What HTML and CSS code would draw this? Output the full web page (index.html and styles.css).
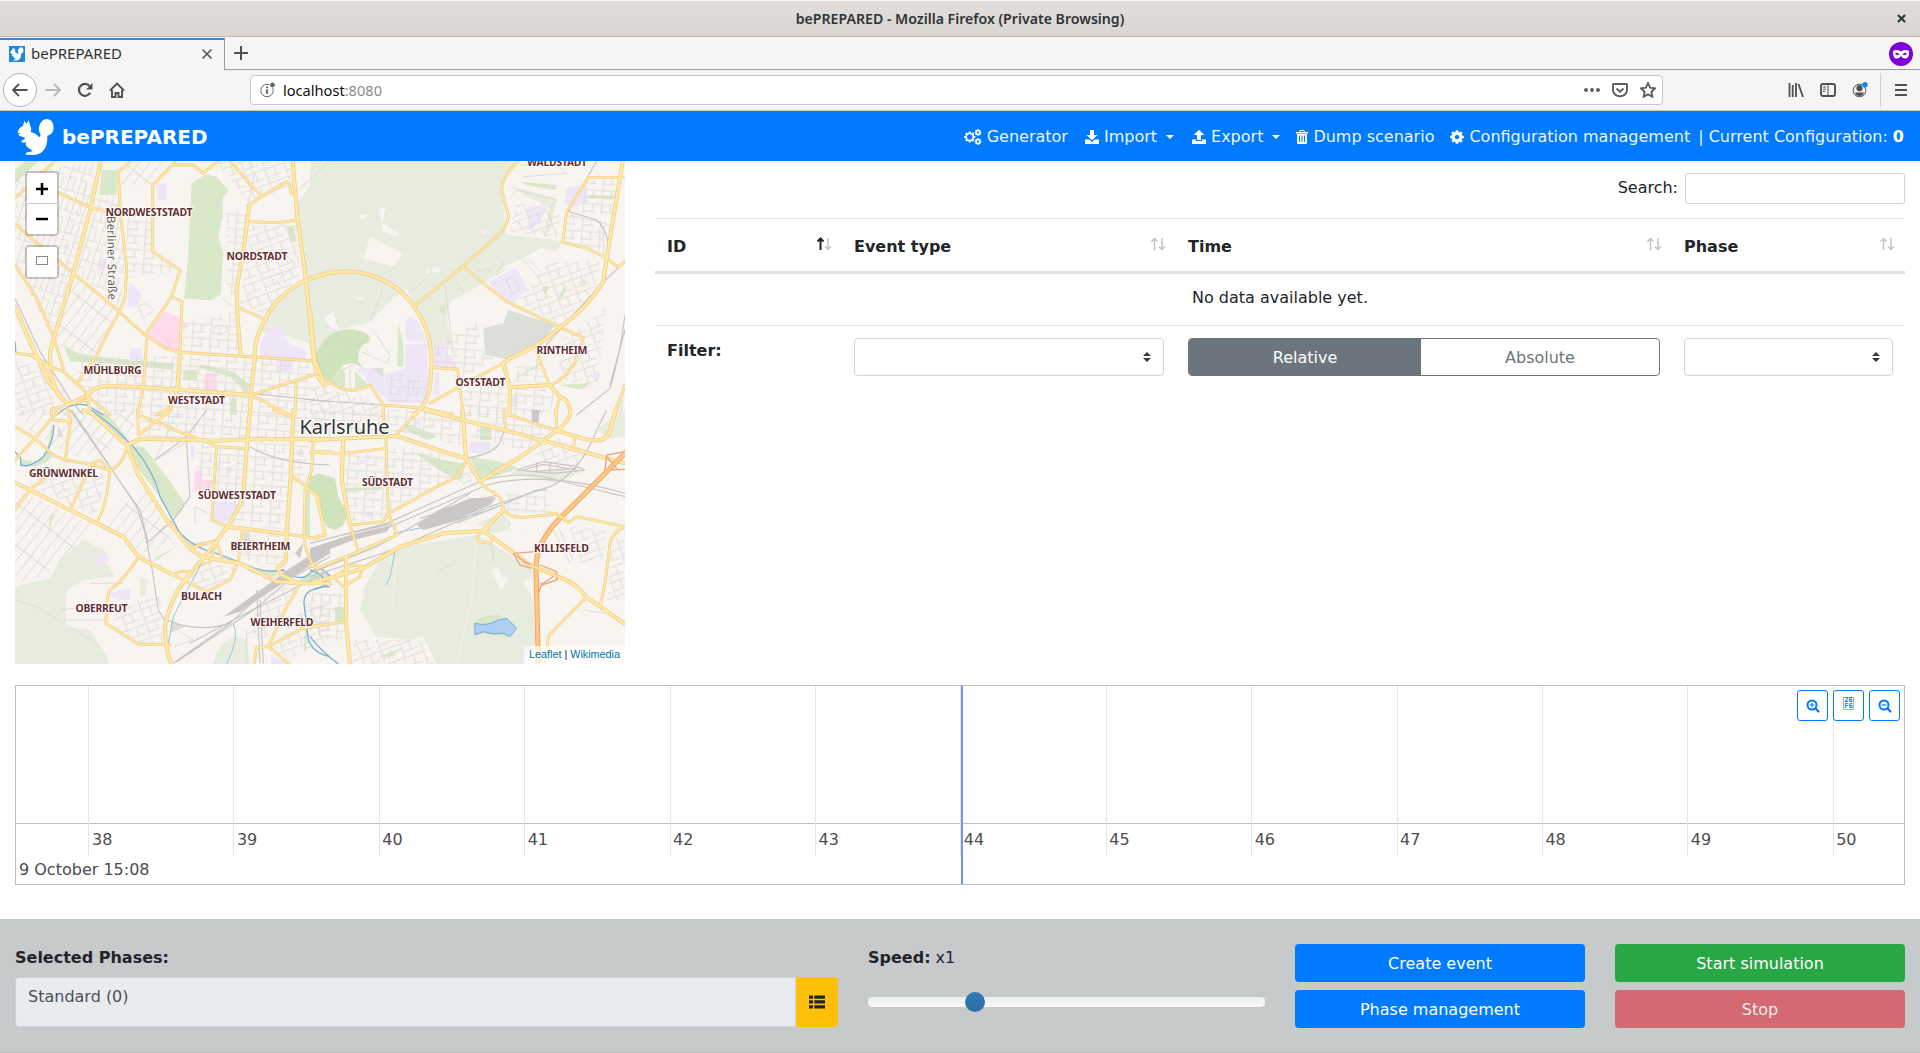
FILE: index.html
```html
<!DOCTYPE html>
<html lang="en">
<head>
<meta charset="utf-8">
<title>bePREPARED</title>
<link rel="stylesheet" href="styles.css">
</head>
<body>
<svg class="defs" width="0" height="0" aria-hidden="true">
  <symbol id="squirrel" viewBox="52 355 114 114"><path d="M71 374L74 364 80 372 87 362 91 375Q97 387 93 397Q108 400 119 413Q126 408 119 398Q115 384 122 371Q130 358 142 358Q161 360 162 384Q161 403 143 408Q144 440 130 454Q119 466 99 466L79 465Q76 459 85 458L99 455Q94 449 86 445Q75 437 79 428Q70 431 65 427Q64 423 74 419L76 414Q61 412 54 404L64 402 54 399Q57 383 71 378Z"/></symbol>
  <symbol id="cog" viewBox="0 0 1792 1792"><path d="M1152 896q0-106-75-181t-181-75-181 75-75 181 75 181 181 75 181-75 75-181zm512-109v222q0 12-8 23t-20 13l-185 28q-19 54-39 91 35 50 107 138 10 12 10 25t-9 23q-27 37-99 108t-94 71q-12 0-26-9l-138-108q-44 23-91 38-16 136-29 186-7 28-36 28h-222q-14 0-24.500-8.500t-11.500-21.500l-28-184q-49-16-90-37l-141 107q-10 9-25 9-14 0-25-11-126-114-165-168-7-10-7-23 0-12 8-23 15-21 51-66.500t54-70.500q-27-50-41-99l-183-27q-13-2-21-12.500t-8-23.500v-222q0-12 8-23t19-13l186-28q14-46 39-92-40-57-107-138-10-12-10-24 0-10 9-23 26-36 98.500-107.500t94.500-71.500q13 0 26 10l138 107q44-23 91-38 16-136 29-186 7-28 36-28h222q14 0 24.500 8.500t11.500 21.500l28 184q49 16 90 37l142-107q9-9 24-9 13 0 25 10 129 119 165 170 7 8 7 22 0 12-8 23-15 21-51 66.500t-54 70.500q26 50 41 98l183 28q13 2 21 12.500t8 23.500z"/></symbol>
  <symbol id="cogs" viewBox="0 0 18 16"><use href="#cog" x="-.8" y="1.500" width="13" height="13"/><circle cx="5.700" cy="8" r="2.700" class="hole"/><use href="#cog" x="10" y="-.5" width="8" height="8"/><use href="#cog" x="10" y="8.500" width="8" height="8"/></symbol>
  <symbol id="download" viewBox="0 0 16 16"><path d="M6 1h4v5h3.500L8 11.200 2.500 6H6zM1 10.500h4.200L8 13l2.800-2.500H15V15H1z"/></symbol>
  <symbol id="upload" viewBox="0 0 16 16"><path d="M6 11V6H2.500L8 .8 13.500 6H10v5zM1 10.500h4V12h6v-1.500h4V15H1z"/></symbol>
  <symbol id="trash" viewBox="0 0 14 16"><path fill-rule="evenodd" d="M5 1h4l1 2h3v1.500H1V3h3zm.5 1L5 3h4l-.5-1zM2 5h10v9q0 1-1 1H3q-1 0-1-1zm2 1.500V13h1V6.500zm2.500 0V13h1V6.500zm2.500 0V13h1V6.500z"/></symbol>
  <symbol id="zoom-in" viewBox="0 0 14 14"><circle cx="6" cy="6" r="4.500" fill="none" stroke="currentColor" stroke-width="2"/><path d="M6 3.700v4.600M3.700 6h4.600" fill="none" stroke="currentColor" stroke-width="1.200"/><path d="M9.500 9.500l3 3" stroke="currentColor" stroke-width="2.200" stroke-linecap="round"/></symbol>
  <symbol id="zoom-out" viewBox="0 0 14 14"><circle cx="6" cy="6" r="4.500" fill="none" stroke="currentColor" stroke-width="2"/><path d="M3.700 6h4.600" stroke="currentColor" stroke-width="1.200"/><path d="M9.500 9.500l3 3" stroke="currentColor" stroke-width="2.200" stroke-linecap="round"/></symbol>
  <symbol id="sort" viewBox="0 0 16 14"><path class="up" d="M4.500 13V1.500M1.500 4.500l3-3 3 3"/><path class="down" d="M12 1v11.500M9 9.500l3 3 3-3"/></symbol>
</svg>

<header class="browser">
  <div class="titlebar"><span class="window-title">bePREPARED - Mozilla Firefox (Private Browsing)</span>
    <svg class="window-close" viewBox="0 0 10 10"><path d="M1 1l8 8M9 1L1 9"/></svg></div>
  <div class="tabs">
    <div class="tab"><span class="favicon"><svg><use href="#squirrel"/></svg></span><span class="tab-title">bePREPARED</span><svg class="tab-close" viewBox="0 0 10 10"><path d="M.5.5l9 9M9.500.5l-9 9"/></svg></div>
    <div class="tab-strip"><svg class="new-tab" viewBox="0 0 14 14"><path d="M7 0v14M0 7h14"/></svg>
      <svg class="private" viewBox="0 0 24 24"><circle cx="12" cy="12" r="12" fill="#8000d7"/><path fill="#fff" fill-rule="evenodd" d="M4 9Q8 7 12 9.500Q16 7 20 9Q20.500 16 17 16.500Q14 17 12 14Q10 17 7 16.500Q3.500 16 4 9zM6 12Q8 14 10.500 12.500Q8 9.500 6 12zM18 12Q16 14 13.500 12.500Q16 9.500 18 12z"/></svg></div>
  </div>
  <div class="toolbar">
    <span class="back"><svg viewBox="0 0 16 16"><path d="M15.500 8H1M7 1.800L1 8l6 6.200"/></svg></span>
    <svg class="tool forward" viewBox="0 0 16 16"><path d="M.5 8H15M9 1.800L15 8l-6 6.200"/></svg>
    <svg class="tool reload" viewBox="0 0 16 16"><path d="M13.200 10.800A6 6 0 1 1 12.600 4"/><path d="M15.500 1v6.500H9z" fill="#4c5254" stroke="none"/></svg>
    <svg class="tool home" viewBox="0 0 16 16"><path d="M1 8.500L8 1.500l7 7M3 8v7h3.500v-4h3v4H13V8"/></svg>
    <div class="address">
      <svg class="info" viewBox="0 0 16 16"><circle cx="7" cy="8.500" r="6.200"/><path d="M7 7.500v4.200M7 4.500v1.800" stroke-width="2"/><circle cx="12.500" cy="3" r="2.800" fill="#666" stroke="#fff" stroke-width=".8"/></svg>
      <span class="url">localhost<span class="port">:8080</span></span>
      <span class="address-actions">
        <svg viewBox="0 0 16 16"><g fill="#5c6062" stroke="none"><circle cx="2" cy="8" r="2"/><circle cx="8" cy="8" r="2"/><circle cx="14" cy="8" r="2"/></g></svg>
        <svg viewBox="0 0 16 16"><path d="M1.500 2h13q.5 0 .5.500V8A7 6.300 0 0 1 1 8V2.500Q1 2 1.500 2zM4.500 6.500L8 9.800l3.500-3.300"/></svg>
        <svg viewBox="0 0 16 16"><path d="M8 1.200l2.100 4.500 4.900.6-3.600 3.400.9 5L8 12.300l-4.300 2.400.9-5L1 6.300l4.900-.6z"/></svg>
      </span>
    </div>
    <div class="toolbar-end">
      <svg viewBox="0 0 16 16"><path d="M1.500 1v14M4.700 3v12M8 1v14M10.500 2l4.500 13" stroke-width="1.800"/></svg>
      <svg viewBox="0 0 16 16"><rect x="1" y="2" width="14" height="12" rx="2"/><path d="M8 2v12M3 5h3M3 7.300h3M3 9.500h2" stroke-width="1"/></svg>
      <svg viewBox="0 0 16 16"><circle cx="7.500" cy="8.500" r="6.300" stroke-width="1"/><circle cx="7.500" cy="6.200" r="3.100" fill="#4c5254" stroke="none"/><path d="M3 10.500h9q-1 3.500-4.500 3.500T3 10.500z" fill="#4c5254" stroke="none"/><circle cx="13" cy="2.800" r="2.700" fill="#0a84ff" stroke="none"/></svg>
      <span class="toolbar-rule"></span>
      <svg class="burger" viewBox="0 0 12 14"><path d="M0 2h12M0 7h12M0 12h12"/></svg>
    </div>
  </div>
</header>

<nav class="navbar">
  <div class="brand"><svg><use href="#squirrel"/></svg><span>bePREPARED</span></div>
  <div class="menu">
    <a class="item generator"><svg><use href="#cogs"/></svg>Generator</a>
    <a class="item dropdown import"><svg><use href="#download"/></svg>Import<i class="caret"></i></a>
    <a class="item dropdown"><svg><use href="#upload"/></svg>Export<i class="caret"></i></a>
    <a class="item dump"><svg><use href="#trash"/></svg>Dump scenario</a>
    <a class="item config"><svg><use href="#cog"/></svg>Configuration management</a>
    <span class="current">| Current Configuration: <b>0</b></span>
  </div>
</nav>

<main class="workspace">
  <section class="map">
    <svg class="map-canvas" viewBox="15 161 610 503" width="610" height="503">
      <defs>
        <pattern id="grid-a" width="54" height="42" patternUnits="userSpaceOnUse" patternTransform="rotate(4)"><path class="street" d="M0 3H54M20 3V42M46 3V25M20 26H54"/></pattern>
        <pattern id="grid-b" width="36" height="62" patternUnits="userSpaceOnUse" patternTransform="rotate(18)"><path class="street" d="M4 0V62M22 0V36M4 36H36M0 58H22"/></pattern>
        <pattern id="grid-c" width="26" height="100" patternUnits="userSpaceOnUse" patternTransform="rotate(38)"><path class="street" d="M5 0V100M0 90H26"/></pattern>
        <pattern id="grid-d" width="60" height="44" patternUnits="userSpaceOnUse" patternTransform="rotate(-20)"><path class="street" d="M0 4H60M12 4V44M40 4V30M12 30H60"/></pattern>
        <g id="roads">
          <g transform="translate(0 155) scale(.33333)">
            <path d="M45 208L120 272 220 355 358 470 435 540 500 582 540 592 765 606 942 618M170 110L272 158 318 170M318 172L458 183M395 18L355 50 362 180 380 340 375 430 358 470 325 530 290 600 230 685M525 22L458 90 458 290 540 345 515 425 435 540M515 425L546 440 540 592M532 700L515 755 470 780M525 30L580 30 608 55 655 18M690 18L785 125M748 150L785 125 860 80Q872 95 872 115L885 115M750 200L830 203 893 195M712 456L795 493M45 595L95 600 150 635 190 650 262 715M45 330L110 430 162 548 190 640M45 130L165 18M440 555L430 697 412 780M752 720L945 658M752 720L870 780M888 680L885 780M262 722L330 780M155 780V762L205 748 260 735 270 760"/>
            <path class="wide" d="M302 18L272 158 220 355 162 548 150 590 152 640M748 150L730 290 710 400 712 480 722 600M878 18L893 195 918 375 942 618 950 660 972 692 990 680M990 352L918 375Q835 415 795 493Q760 560 765 606L752 720 750 780M45 455L90 560 145 680 200 745M95 600L140 630 175 720 205 748 262 722Q280 695 320 692L430 697 752 720M540 592L532 700"/>
          </g>
          <g transform="translate(310 155) scale(.33333)">
            <path d="M312 455L458 335 560 245Q595 215 595 180L576 110Q570 70 625 18M458 335L585 437 750 517 820 548 795 620Q760 680 718 690L680 590M835 68H940M835 68L770 170 758 262 830 280 890 310 925 337 945 318M365 638L443 642 450 700 460 780M60 682Q120 725 180 690L220 750V780M220 750L345 760 430 780M360 745L440 700 580 625M945 690L910 780M750 725L735 780M45 690L60 682"/>
            <path class="wide" d="M0 370Q100 335 180 360Q270 390 312 455Q365 530 365 620L360 700Q345 760 310 780M938 18L890 310 880 380Q830 460 750 517Q680 580 600 610L580 625 600 700 598 780M600 697L718 690 750 725Q785 740 780 780M0 465L15 620 45 690"/>
          </g>
          <g transform="translate(0 410) scale(.33333)">
            <path d="M45 50L105 85 160 135 195 150 275 163 330 182Q375 160 380 105M45 150L105 85 160 20 180 0M160 30L212 35 205 0M212 35L195 150M45 300L90 240 150 190M275 160L210 300M275 160L300 150 330 182Q320 290 290 338M415 440Q380 500 330 540Q318 560 318 640L415 702 510 704M520 495L620 545 690 510 715 455 727 360M635 330L650 110 742 115M555 70L650 108M635 330L682 350M895 525Q890 545 860 590L805 710 770 712 762 762M805 710L868 762M805 710L910 655 990 642M940 90L935 180 915 240 912 380Q920 450 950 475L990 460M940 125H990M515 0L415 75 413 0M415 15L475 38 560 75M880 200L955 260 975 375 950 385 860 372M820 0L880 22M570 415Q610 400 650 395L630 455Q600 470 605 440L570 415M520 495Q540 480 570 485L540 530M650 395L665 440"/>
            <path class="wide" d="M250 0L275 10 380 105 415 195 500 330 570 415 605 440 720 460 830 515 895 520 990 520M380 105L425 86 650 92 745 88 990 88M45 218L90 240 210 300 290 340 370 380 415 440 520 495M520 780Q495 720 495 650Q505 590 540 530L605 450 650 395 682 350 712 300Q735 260 732 220L742 90 750 0M682 350L860 372M880 0L872 200 860 372 858 450 832 475 845 495 895 520"/>
          </g>
          <g transform="translate(310 410) scale(.33333)">
            <path d="M260 72L330 0M510 215L535 240Q580 255 580 300M582 0Q580 20 590 62M468 145Q460 200 400 220L235 310 228 90 218 0M100 85L95 210 120 345 145 425M0 128L100 130 228 115M120 345L220 335 235 310 262 375 145 425 20 475 0 465M580 300Q600 322 640 322L740 312 775 338 800 320 945 350Q900 365 898 420L885 520 870 590M830 562Q740 650 715 680L705 762M110 440L108 640M108 635L0 650M0 240L20 260 45 375 0 385M795 78L790 120M740 50L738 0M600 15L740 62M520 362Q495 375 505 395L540 400 550 385M535 345L530 370M110 490L70 500 100 530 150 500 160 470 130 465 70 500"/>
            <path class="wide" d="M0 90L260 78 400 125 468 145 458 0M468 145L510 215 640 135 740 62Q780 35 782 0M345 0L465 32 590 62 700 92 945 160M740 62L800 80Q890 110 900 60L918 0M580 300L520 362 400 370 270 410 160 475 110 490 0 520M520 362L660 465 745 500Q800 520 830 562L870 590 945 642M108 440L108 640 120 762M100 85L95 210 120 345"/>
          </g>
        </g>
      </defs>
      <rect x="15" y="161" width="610" height="503" fill="#f8f4f0"/>

      <!-- forest, parks and built-up tints -->
      <g transform="translate(0 155) scale(.33333)">
        <path class="forest" d="M888 150L990 10V640H942L928 565 850 540 785 530Q785 470 840 420L918 375Z"/>
        <path class="park" d="M575 85L618 58 650 65 685 105 668 130 668 180 655 250 670 290 662 420 630 436 552 430 565 300ZM305 45H350V120H298ZM45 45L75 18H115L45 85ZM190 570L235 595 320 608 520 625 520 645 320 625 210 620ZM550 645H592V675H550ZM862 215L880 210 890 260 872 260ZM690 730H710V780H690ZM600 628L700 650 750 690 740 715 690 665 600 640Z"/>
        <path class="campus" d="M465 85H500V135H475ZM387 380L424 415 412 455 382 455ZM300 315L318 305 312 345 290 350ZM390 580H425V618H390ZM812 515H845L865 565 920 588V612H780V565ZM828 615H880V650H828ZM182 270H205V290ZM180 700L200 710 180 725Z"/>
        <path class="medical" d="M490 468L545 490 540 588 505 587 437 540ZM612 655H650V705H612ZM550 505L568 515 550 520Z"/>
        <path d="M945 618Q940 565 990 535V670Z" class="woods"/>
      </g>
      <g transform="translate(310 155) scale(.33333)">
        <path class="forest" d="M0 18H60L20 50 0 100ZM55 18H620L576 75 585 210 590 240 700 250 755 260 740 290 690 280 640 310 590 330 530 380 420 440 410 490 425 570 365 570 310 450 290 400 240 440 180 500 150 510 80 525 20 590 0 580V60ZM590 90L740 130 720 230 700 240 720 160Z"/>
        <path fill="#f8f4f0" d="M205 160L228 155 218 205 265 235 260 245 220 230ZM180 245L270 290 278 300 250 335 160 310ZM345 352L360 342 355 358ZM365 340L385 332 390 350 372 355ZM515 232L530 225 530 238ZM130 425L165 428 150 438ZM45 485L70 470 85 520 60 530ZM150 180L175 178 155 195Z"/>
        <path class="woods" d="M22 620Q25 530 115 522Q190 530 178 560Q140 570 145 620L165 645Q130 615 100 630L60 680 35 670Q20 650 22 620Z"/>
        <path class="park" d="M60 682L95 640 105 655V705ZM135 705V650L175 690ZM390 450Q410 445 405 475Q385 480 390 450ZM265 505L280 570V635H262ZM630 80L740 90 735 105 650 90ZM835 120L915 122V132L835 130ZM695 395L715 390 710 425ZM740 435L770 385 760 425ZM600 680L690 625 690 632ZM750 690L835 685Q825 710 790 700Z"/>
        <path class="campus" d="M300 485L325 500 350 560 290 558 285 500ZM285 570L350 565 360 720 345 745 240 745 180 690 145 640 180 640 220 660 285 640ZM375 565H405L412 600 435 615V640H370V570ZM375 650H388V720H370ZM535 380L620 338 650 400 605 450 580 435ZM655 155L715 150 695 190 660 228 652 220ZM770 97L830 90 835 140 800 155 765 150ZM845 665L870 655 865 680ZM605 720H622V755H605Z"/>
        <path class="cemetery" d="M595 465L735 510 700 560 650 590 590 612 525 600 520 520 580 505ZM180 640H220V665Z"/>
        <path class="forest" d="M800 380L830 370 820 400ZM945 705L935 780H910Z"/>
      </g>
      <g transform="translate(0 410) scale(.33333)">
        <path class="forest" d="M250 390L315 420 320 460 345 500 250 510 220 530 200 540 195 650 270 660 320 740 325 762H45V530L150 505 180 450ZM640 762Q650 700 705 680L740 690 750 762ZM420 505L445 508 435 560 420 560Z"/>
        <path class="park" d="M385 110L430 110 500 200 555 280Q555 300 520 325L480 260 410 170ZM280 0L320 10 380 80 370 90ZM155 45Q165 90 145 120L160 135Q130 180 60 165L62 145Q120 170 140 125ZM520 335L560 400Q610 400 662 380L640 400 590 415 550 395ZM460 455L530 410 540 405 470 440ZM740 480H830V500L760 490ZM920 530V710H940L912 720ZM150 320L165 310 145 365ZM895 510L940 485 990 490V520H920ZM912 240H930V380H912Z"/>
        <path class="woods" d="M935 200L955 190 990 200V355L970 330 955 260 920 235Z"/>
        <path class="campus" d="M640 275H712V300Q690 330 670 338L640 330ZM280 440L315 430 330 450 290 468ZM320 550L390 535V570L350 570ZM570 105H582V145H570ZM740 380H750V430H740ZM530 10H550V25H530ZM890 120H912V140H890ZM810 735L865 762H815ZM682 168H695V188H682Z"/>
        <path class="medical" d="M585 180H605L608 210H637V235H600L580 250Z"/>
        <path class="cemetery" d="M515 630L555 650 510 670ZM175 45L190 80 172 80ZM730 365H748V400H730Z"/>
      </g>
      <g transform="translate(310 410) scale(.33333)">
        <path class="forest" d="M225 420L500 375 540 395 620 450 665 465 670 490 640 520 670 570 675 700 640 762H380L340 680 300 690 200 680 150 600 165 530ZM500 340L580 310 605 340 595 360 550 370ZM860 60L920 10 945 0V80L900 85ZM620 180L830 180 740 220 600 190Z"/>
        <path class="forest-clearing" d="M545 480L565 470 575 500 595 505 575 540 560 520ZM580 380L650 370 640 400 660 430 630 440Z"/>
        <path class="park" d="M280 40L330 55 380 80 350 90 290 60ZM310 125L400 150 460 160V205L440 210 380 175ZM480 140L570 155 625 175 540 205 510 210ZM510 50H545V90H510ZM490 640Q520 610 570 615L610 640Q615 680 580 680L490 670ZM100 235L215 230V240L105 243ZM75 590H105V640H75ZM205 740L285 710 240 740Z"/>
        <path class="woods" d="M0 200L40 195 75 205 85 260 115 310 100 345 75 360 50 350 40 320 25 260 0 245Z"/>
        <path class="campus" d="M478 95H540V130H478ZM310 25L330 30 335 50 310 45ZM165 305H188V322H165ZM150 150H168V162H150Z"/>
        <path class="lake" d="M495 640Q530 650 565 630L590 625 620 655 600 680 580 670 550 672 520 665 495 675Z"/>
      </g>

      <!-- residential streets -->
      <g transform="translate(0 155) scale(.33333)">
        <path fill="url(#grid-b)" d="M45 60L290 18 265 150 200 400 150 540 45 320ZM290 130L355 120 375 340 360 460 230 350Z"/>
        <path fill="url(#grid-c)" d="M220 365L350 470 290 600 160 570ZM385 18H500L458 90H360Z"/>
        <path fill="url(#grid-a)" d="M550 500L710 470 720 600H550ZM380 180L460 190V290L540 345 380 370ZM680 170H745L730 290 710 440 680 400ZM230 605H935V780H270L240 680Z"/>
        <path fill="url(#grid-d)" d="M650 18H870L880 100 748 150ZM750 210L890 210 900 360 800 480 720 450ZM45 610L130 640 180 780H45Z"/>
        <path class="street" d="M745 18L762 60 742 160M668 130L610 190M850 290L885 330 830 380 850 400M260 85L240 175M415 455L430 490 460 465 435 445ZM500 550L510 580M505 555L525 570M990 18L890 110M665 430L700 455M650 510L640 530Q650 550 680 530V510"/>
      </g>
      <g transform="translate(310 155) scale(.33333)">
        <path fill="url(#grid-d)" d="M600 230L620 140 750 180 740 250ZM650 400L720 320 870 320 860 390 750 510 620 445ZM760 550L890 460 860 700 740 670ZM0 690L130 720 210 750V780H0Z"/>
        <path fill="url(#grid-a)" d="M770 180L890 200 870 300 760 260ZM375 570L500 500 520 590 560 610 450 670 370 640ZM460 700L590 690V780H460ZM610 700H740L720 780H610ZM835 75H930L920 180H800ZM610 640L680 610 710 680H610ZM240 660H350V740H240Z"/>
        <path class="street" d="M630 30H740L770 55 640 65M600 130L620 105 740 135 720 160M640 315L690 370M655 310L690 350M580 320L560 360 590 340M500 350L535 340 550 360M405 390L430 600M300 410L350 370M430 370L460 410M180 500L220 400M780 180L900 210M880 215V310M590 375L610 365 630 405 605 415ZM45 510L80 530M70 550Q10 570 25 620L60 620Q50 600 100 600Q120 560 90 535Z"/>
        <path class="street" d="M185 520L240 600 230 625 155 590M90 650L125 630 150 650M120 635V700"/>
      </g>
      <g transform="translate(0 410) scale(.33333)">
        <path fill="url(#grid-c)" d="M45 240L280 345 240 400 140 490 45 525ZM300 340L440 230 520 400 430 440 370 380ZM45 0H400V50L320 130 210 140 90 60Z"/>
        <path fill="url(#grid-a)" d="M420 15H990V85H430ZM590 100L740 120 720 300 590 240ZM745 100H870L860 360 690 340 740 240ZM720 375H855V470L730 450ZM880 95H930L910 230H875Z"/>
        <path fill="url(#grid-d)" d="M100 160L320 190 290 320 90 230ZM545 510L610 460 710 470 680 510 610 540ZM350 580L480 560 490 700H400L340 650ZM800 540L890 530 800 690 740 670ZM920 580H990V700L850 750 820 710Z"/>
        <path class="street" d="M585 340V290L625 310M520 30L465 150 390 90M465 150L590 80M190 630H320M180 600L260 590V570M270 520H370M45 570L110 590 290 700M530 660L580 690 520 710M740 660V760"/>
      </g>
      <g transform="translate(310 410) scale(.33333)">
        <path fill="url(#grid-a)" d="M0 0H580V60L460 40 470 110 260 65H0ZM105 130H230V325L125 335 100 220ZM230 110L400 130 460 190 235 300ZM610 10L740 50 640 120 480 80V45ZM0 550L100 550V700L0 670ZM590 250L700 245 730 310H590Z"/>
        <path fill="url(#grid-d)" d="M780 350L890 360 880 450 810 460ZM910 370H945V570H890ZM640 110L720 75 840 125 780 190 690 150ZM130 690L330 690 370 762H130Z"/>
        <path class="street" d="M745 350L790 450M720 340L780 460M820 600L885 610M440 200L470 190 485 210 460 220ZM480 190L530 165 545 185M545 400L550 460M380 485L435 460"/>
        <path class="track" d="M500 380L485 570 440 760M260 440L245 600"/>
      </g>

      <!-- rivers -->
      <g class="river">
        <path transform="translate(0 410) scale(.33333)" d="M275 0L350 60 400 110Q460 180 480 260L540 370Q590 420 650 430L750 470Q800 490 850 480Q900 520 930 490T990 500M160 45Q165 90 130 140Q90 175 62 165L62 145 45 125M990 530Q910 530 912 580L925 690Q940 730 990 740"/>
        <path class="stream" transform="translate(0 410) scale(.33333)" d="M605 460Q540 580 520 620L505 700M700 640Q720 680 680 762"/>
        <path transform="translate(310 410) scale(.33333)" d="M0 480Q40 490 50 525L10 540M0 680Q40 730 85 762"/>
        <path class="stream" transform="translate(310 410) scale(.33333)" d="M255 425L240 500 228 525M250 370L400 340 540 300 680 240 710 240"/>
        <path transform="translate(0 155) scale(.33333)" d="M45 560L48 600M170 780Q210 740 260 750L310 780"/>
      </g>

      <!-- railway tracks and yards -->
      <g class="rail">
        <path transform="translate(0 410) scale(.33333)" d="M215 0L330 170 410 290 435 370 455 470 475 600 500 640M210 0L420 300 445 400M520 760L690 640 850 490 990 400M530 755L760 600 880 500 990 440M500 630Q590 670 690 640M570 700L700 630 990 480M750 110Q830 160 990 165M620 0L560 80 465 150M560 100L570 260 520 330 440 400M770 540L780 760M780 570L790 760"/>
        <path transform="translate(310 410) scale(.33333)" d="M0 400L230 340 520 210Q640 180 740 210L945 260M0 420L240 350 530 225Q700 180 945 250M0 490L200 410 480 250M0 500L250 420 540 290 720 230Q810 190 860 60L890 0M100 375L250 340M468 145Q570 130 575 80L590 50"/>
        <path transform="translate(310 155) scale(.33333)" d="M860 18L775 170 860 195Q900 230 895 310M945 480Q930 600 900 700L800 780M960 470L900 690M880 380L690 590M0 735L220 750M945 320L870 390"/>
        <path transform="translate(0 155) scale(.33333)" d="M45 430L120 590 215 740 250 780M755 715L990 740"/>
      </g>
      <g class="yard">
        <path transform="translate(310 410) scale(.33333)" d="M320 345L370 310 480 265 560 262 540 285 430 335 340 360ZM0 415L120 375 245 345 230 365 130 390 0 440ZM665 0H690L685 38H665Z"/>
        <path transform="translate(0 410) scale(.33333)" d="M670 620L740 570 830 505 990 400 990 430 840 525 720 605ZM885 430L910 400 900 445Z"/>
      </g>
      <path class="rail" transform="translate(310 410) scale(.33333)" d="M620 180L700 155 800 170 825 180 730 190 620 180 M640 180L700 163 800 180M660 185L800 175M680 155V180M720 160V188M380 305L560 255M330 325L480 280M440 340L560 290"/>

      <use href="#roads" class="road-casing"/>
      <use href="#roads" class="road-fill"/>
      <g transform="translate(310 410) scale(.33333)" fill="none">
        <g stroke="#e9a27c" stroke-width="4"><path d="M945 125L890 135 885 180 945 178M610 430L675 425M610 430L630 465 665 475M690 465L740 485 740 510 695 525 685 550M620 435Q640 460 680 470M740 490Q700 525 690 520M890 140L920 175"/></g>
        <path stroke="#eda05c" stroke-width="15" d="M950 125L750 325Q680 395 678 470L685 762"/>
        <path stroke="#ffc684" stroke-width="10" d="M950 125L750 325Q680 395 678 470L685 762"/>
        <path stroke="#fde293" stroke-width="7" d="M660 465L745 500M720 305L770 330"/>
      </g>

      <g class="district">
        <text x="105.500" y="215.500" textLength="87">NORDWESTSTADT</text>
        <text x="527" y="165.500" textLength="60">WALDSTADT</text>
        <text x="226.500" y="260" textLength="61">NORDSTADT</text>
        <text x="83.500" y="374" textLength="58">MÜHLBURG</text>
        <text x="168" y="404" textLength="57">WESTSTADT</text>
        <text x="536.500" y="353.500" textLength="51">RINTHEIM</text>
        <text x="455.500" y="386" textLength="50">OSTSTADT</text>
        <text x="29" y="476.500" textLength="69">GRÜNWINKEL</text>
        <text x="198" y="498.500" textLength="78">SÜDWESTSTADT</text>
        <text x="362" y="485.500" textLength="51">SÜDSTADT</text>
        <text x="230.500" y="550" textLength="60">BEIERTHEIM</text>
        <text x="534" y="552" textLength="55">KILLISFELD</text>
        <text x="181" y="600" textLength="41">BULACH</text>
        <text x="75.500" y="612" textLength="52">OBERREUT</text>
        <text x="250.500" y="626" textLength="63">WEIHERFELD</text>
      </g>
      <text class="street-name" transform="translate(107 216) rotate(89)" textLength="84">Berliner Straße</text>
      <text class="city" x="299.500" y="434" textLength="90">Karlsruhe</text>
    </svg>
    <div class="map-controls">
      <div class="control zoom"><span><svg viewBox="0 0 12 12"><path d="M0 6h12M6 0v12"/></svg></span><span><svg viewBox="0 0 12 12"><path d="M0 6h12"/></svg></span></div>
      <div class="control square"><span><i></i></span></div>
    </div>
    <div class="attribution"><a>Leaflet</a> | <a>Wikimedia</a></div>
  </section>

  <section class="events">
    <label class="search">Search:<input type="text"></label>
    <div class="row head">
      <div class="cell sorted">ID<svg class="sort"><use href="#sort"/></svg></div>
      <div class="cell">Event type<svg class="sort"><use href="#sort"/></svg></div>
      <div class="cell">Time<svg class="sort"><use href="#sort"/></svg></div>
      <div class="cell">Phase<svg class="sort"><use href="#sort"/></svg></div>
    </div>
    <div class="empty">No data available yet.</div>
    <div class="row filters">
      <div class="cell"><b>Filter:</b></div>
      <div class="cell"><div class="select"><svg viewBox="0 0 8 10"><path d="M4 0l4 4H0zM4 10l4-4H0z"/></svg></div></div>
      <div class="cell"><div class="toggle"><span class="on">Relative</span><span>Absolute</span></div></div>
      <div class="cell"><div class="select"><svg viewBox="0 0 8 10"><path d="M4 0l4 4H0zM4 10l4-4H0z"/></svg></div></div>
    </div>
  </section>
</main>

<section class="timeline">
  <div class="ticks"><span></span><span class="first">38</span><span>39</span><span>40</span><span>41</span><span>42</span><span>43</span><span>44</span><span>45</span><span>46</span><span>47</span><span>48</span><span>49</span><span>50</span></div>
  <div class="date">9 October 15:08</div>
  <div class="now"></div>
  <div class="timeline-tools">
    <button><svg><use href="#zoom-in"/></svg></button>
    <button><span class="codepoint">26<br>F6</span></button>
    <button><svg><use href="#zoom-out"/></svg></button>
  </div>
</section>

<footer class="controls">
  <div class="phases"><b class="label">Selected Phases:</b>
    <div class="phase-group"><div class="phase-field">Standard (0)</div><button class="list"><svg viewBox="0 0 16 14"><path d="M0 .5h4v3.300H0zM5.300.5H16v3.300H5.300zM0 5.300h4v3.300H0zM5.300 5.300H16v3.300H5.300zM0 10.200h4v3.300H0zM5.300 10.200H16v3.300H5.300z"/></svg></button></div></div>
  <div class="speed"><div class="label"><b>Speed:</b> x1</div><div class="slider"><i></i></div></div>
  <div class="stack"><button class="btn primary">Create event</button><button class="btn primary">Phase management</button></div>
  <div class="stack"><button class="btn success">Start simulation</button><button class="btn danger">Stop</button></div>
</footer>
</body>
</html>
```
FILE: styles.css
```css
* { box-sizing: border-box; }
body { margin: 0; height: 1053px; display: flex; flex-direction: column; overflow: hidden; background: #fff; color: #212529; font: 16px/24px "DejaVu Sans", sans-serif; }
svg { display: block; }
button { font: inherit; padding: 0; }
.defs { position: absolute; }

/* browser chrome */
.browser { height: 111px; background: #f6f5f4; font: 15px/20px "Noto Sans", sans-serif; color: #2e3436; border-bottom: 1px solid #cdc7c2; }
.titlebar { height: 37px; display: grid; grid-template-columns: 1fr auto 1fr; align-items: center; background: linear-gradient(#e1dedb, #dad6d2); border-top: 1px solid #f5f4f2; border-bottom: 1px solid #bfb8b1; }
.window-title { grid-column: 2; font-weight: 600; font-size: 14.140px; }
.window-close { width: 9px; height: 9px; justify-self: end; margin-right: 14px; stroke: #2e3436; stroke-width: 2.400; }
.tabs { display: flex; height: 33px; }
.tab { width: 225px; border-top: 2px solid #3584e4; border-right: 1px solid #9d9c9b; margin-top: 1px; display: flex; align-items: center; padding: 0 0 2px 9px; }
.favicon { width: 16px; height: 16px; background: #1c8adb; padding: 1px; }
.favicon svg { width: 14px; height: 14px; fill: #fff; }
.tab-title { margin: -2px 0 0 6px; flex: 1; font-size: 15px; }
.tab-close { width: 10px; height: 10px; margin-right: 12px; stroke: #4c5254; stroke-width: 1.500; }
.tab-strip { flex: 1; display: flex; align-items: center; border-bottom: 1px solid #9d9c9b; padding: 0 7px 0 9px; justify-content: space-between; }
.new-tab { width: 14px; height: 14px; stroke: #4c5254; stroke-width: 2; }
.private { width: 24px; height: 24px; margin-top: 1px; }
.toolbar { height: 40px; display: flex; align-items: center; padding-left: 3px; fill: none; stroke: #4c5254; stroke-width: 1.900; }
.back { width: 34px; height: 34px; border: 1px solid #b4b2b0; border-radius: 50%; background: #fff; display: grid; place-items: center; }
.back svg, .tool { width: 16px; height: 16px; }
.forward { margin-left: 8px; stroke: #b8b8b7; }
.reload { margin-left: 16px; stroke-width: 2.200; }
.home { margin-left: 16px; }
.address { width: 1413px; height: 30px; margin-left: 125px; border: 1px solid #cdc7c2; border-radius: 4px; background: #fff; display: flex; align-items: center; padding: 0 6px 0 9px; }
.info { width: 16px; height: 16px; stroke: #666; stroke-width: 1; }
.url { margin-left: 7px; flex: 1; color: #111; stroke: none; font-size: 14.600px; line-height: 19px; }
.port { color: #8a8a8a; }
.address-actions { display: flex; gap: 12px; stroke: #5c6062; }
.address-actions svg, .toolbar-end svg { width: 16px; height: 16px; }
.toolbar-end { flex: 1; display: flex; align-items: center; padding-left: 125px; gap: 16px; }
.toolbar-rule { width: 1px; height: 34px; background: #d2d0ce; margin-left: -4px; }
.toolbar-end .burger { width: 12px; height: 14px; margin-left: -2px; stroke-width: 2; }

/* application bar */
.navbar { height: 50px; background: #007bff; color: #fff; display: flex; align-items: center; justify-content: space-between; padding: 1px 16px 0 17px; fill: #fff; }
.brand { display: flex; align-items: center; font-weight: bold; font-size: 20px; }
.brand svg { width: 38px; height: 38px; margin-right: 7px; }
.menu { display: flex; color: rgba(255,255,255,.95); white-space: nowrap; }
.item { display: flex; align-items: center; margin-right: 15px; }
.item svg { width: 16px; height: 16px; margin-right: 4px; }
.item.generator { margin-right: 16px; }
.item.generator svg { width: 18px; margin-right: 5px; }
.item.dropdown { margin-right: 15px; }
.item.dropdown.import { margin-right: 17px; }
.item.dump svg { width: 14px; }
.item.config { margin-right: 8px; }
.hole { fill: #007bff; }
.current b { color: #fff; }
.caret { border: 4px solid transparent; border-top-color: #fff; border-bottom: 0; margin-left: 9px; }

/* map */
.workspace { height: 503px; display: flex; padding: 0 15px; gap: 30px; }
.map { width: 610px; height: 503px; position: relative; overflow: hidden; }
.street { fill: none; stroke: #d9d5d1; stroke-width: 2.300; }
.track { fill: none; stroke: #f6f0ea; stroke-width: 3; }
.forest { fill: #e8ecdf; }
.forest-clearing { fill: #f8f4f0; }
.park { fill: #d9e8c9; }
.woods { fill: #d0e3bd; }
.campus { fill: #eee6f7; }
.medical { fill: #ffdbed; }
.cemetery { fill: #dcdfd8; }
.lake { fill: #adcff0; stroke: #75aad8; stroke-width: 3; }
.river { fill: none; stroke: #7eb0d5; stroke-width: 4; }
.stream { stroke: #9cc3dd; stroke-width: 3; }
.rail { fill: none; stroke: #c8c6c4; stroke-width: 3.500; }
.yard { fill: #cac8c6; }
.road-casing, .road-fill { fill: none; stroke-linecap: round; stroke-linejoin: round; }
.road-casing { stroke: #efc987; stroke-width: 8.500; --road: 12px; }
.road-fill { stroke: #fee9a5; stroke-width: 5; --road: 8px; }
.wide { stroke-width: var(--road); }
.district { font: bold 10.500px "Noto Sans", sans-serif; fill: #5e2f33; stroke: #fffaf8; stroke-width: 2px; paint-order: stroke; }
.street-name { font: 11.500px "Noto Sans", sans-serif; fill: #66564c; stroke: #fff; stroke-width: 1.500px; paint-order: stroke; }
.city { font: 20px "Noto Sans", sans-serif; fill: #333; stroke: #fff; stroke-width: 2px; paint-order: stroke; }
.map-controls { position: absolute; left: 10px; top: 10px; display: grid; gap: 9px; }
.control { width: 34px; border: 2px solid rgba(0,0,0,.2); border-radius: 4px; background-clip: padding-box; overflow: hidden; }
.control span { height: 30px; background: #fff; display: grid; place-items: center; }
.control.zoom span:first-child { padding-top: 2px; }
.control span + span { border-top: 1px solid #ccc; height: 31px; }
.zoom svg { width: 12px; height: 12px; stroke: #000; stroke-width: 2.500; }
.square i { width: 12px; height: 9px; margin-bottom: 3px; border: 1px solid #888; }
.attribution { position: absolute; right: 0; bottom: 0; padding: 0 5px; background: rgba(255,255,255,.7); font: 10.800px/17px "Liberation Sans", sans-serif; height: 18px; color: #333; }
.attribution a { color: #0078a8; }

/* event table */
.events { width: 1250px; padding-top: 12px; }
.search { display: flex; justify-content: flex-end; height: 45px; line-height: 30px; }
.search input { width: 220px; height: 31px; margin-left: 7px; border: 1px solid #ced4da; border-radius: 3px; }
.row { display: grid; grid-template-columns: 187px 334px 496px 233px; border-top: 1px solid #dee2e6; }
.cell { padding: 12px; }
.filters .cell:first-child { padding-top: 13px; }
.head { height: 56px; border-bottom: 3px solid #dee2e6; font-weight: bold; }
.head .cell { padding: 16px 10px 0 12px; display: flex; justify-content: space-between; }
.sort { width: 16px; height: 14px; margin-top: 2px; fill: none; stroke: #c2c3c4; stroke-width: 1.500; }
.sorted .sort { --up: #212529; --up-width: 2; }
.up { stroke: var(--up, #c2c3c4); stroke-width: var(--up-width, 1.500); }
.empty { height: 51px; text-align: center; line-height: 47px; }
.select { height: 38px; border: 1px solid #ced4da; border-radius: 4px; display: flex; justify-content: flex-end; align-items: center; padding-right: 12px; }
.select svg { width: 8px; height: 10px; fill: #343a40; }
.toggle { height: 38px; display: grid; grid-template-columns: 232px 1fr; border: 1px solid #6c757d; border-radius: 4px; overflow: hidden; line-height: 37px; text-align: center; color: #6c757d; }
.toggle .on { background: #6c757d; color: #fff; }

/* timeline */
.timeline { margin: 21px 15px 0; height: 200px; border: 1px solid #bfbfbf; position: relative; overflow: hidden; color: #4d4d4d; }
.ticks { height: 170px; display: grid; grid-template-columns: 72px repeat(13, 145.400px); background: linear-gradient(#bfbfbf, #bfbfbf) 0 137px / 100% 1px no-repeat; }
.ticks span { border-left: 1px solid #e5e5e5; padding: 142px 0 0 2.500px; }
.ticks span.first { padding-left: 3px; }
.ticks span:first-child { border: 0; }
.date { padding-left: 3px; margin-top: 2px; }
.now { position: absolute; left: 945px; top: 0; width: 2px; height: 100%; background: #6e94ff; }
.timeline-tools { position: absolute; top: 4px; right: 4px; display: flex; gap: 5px; }
.timeline-tools button { width: 31px; height: 31px; border: 1px solid #007bff; border-radius: 3px; background: #fff; color: #007bff; display: grid; place-items: center; }
.timeline-tools svg { width: 14px; height: 14px; }
.codepoint { border: 1px solid #80bdff; width: 11px; height: 13px; font: bold 7px/5.500px "DejaVu Sans Mono", monospace; margin-top: -4px; }

/* bottom controls */
.controls { margin-top: 34px; height: 134px; background: #c6cacb; border-bottom: 1px solid #b9bdbe; padding: 25px 15px 0; display: grid; grid-template-columns: 823px 397px 290px 290px; column-gap: 30px; }
.label { display: block; margin-top: 2px; height: 31px; }
.phase-group { display: flex; height: 50px; }
.phase-field { width: 781px; height: 50px; background: #e9ecef; border: 1px solid #ced4da; border-radius: 4px 0 0 4px; padding: 7px 12px; color: #495057; }
.list { width: 42px; height: 50px; border: 0; background: #ffc107; border-radius: 0 4px 4px 0; display: grid; place-items: center; }
.list svg { width: 16px; height: 14px; fill: #212529; }
.slider { height: 10px; margin-top: 20px; border-radius: 4px; background: linear-gradient(#eee, #f9f9f9); display: flex; align-items: center; padding-left: 97px; }
.slider i { width: 20px; height: 20px; border-radius: 50%; background: linear-gradient(#337ab7, #2e6da4); }
.stack { display: flex; flex-direction: column; gap: 8px; }
.btn { height: 38px; border: 0; border-radius: 4px; color: #fff; padding-top: 1px; }
.primary { background: #007bff; }
.success { background: #28a745; }
.danger { background: #dc3545; opacity: .65; }
```
